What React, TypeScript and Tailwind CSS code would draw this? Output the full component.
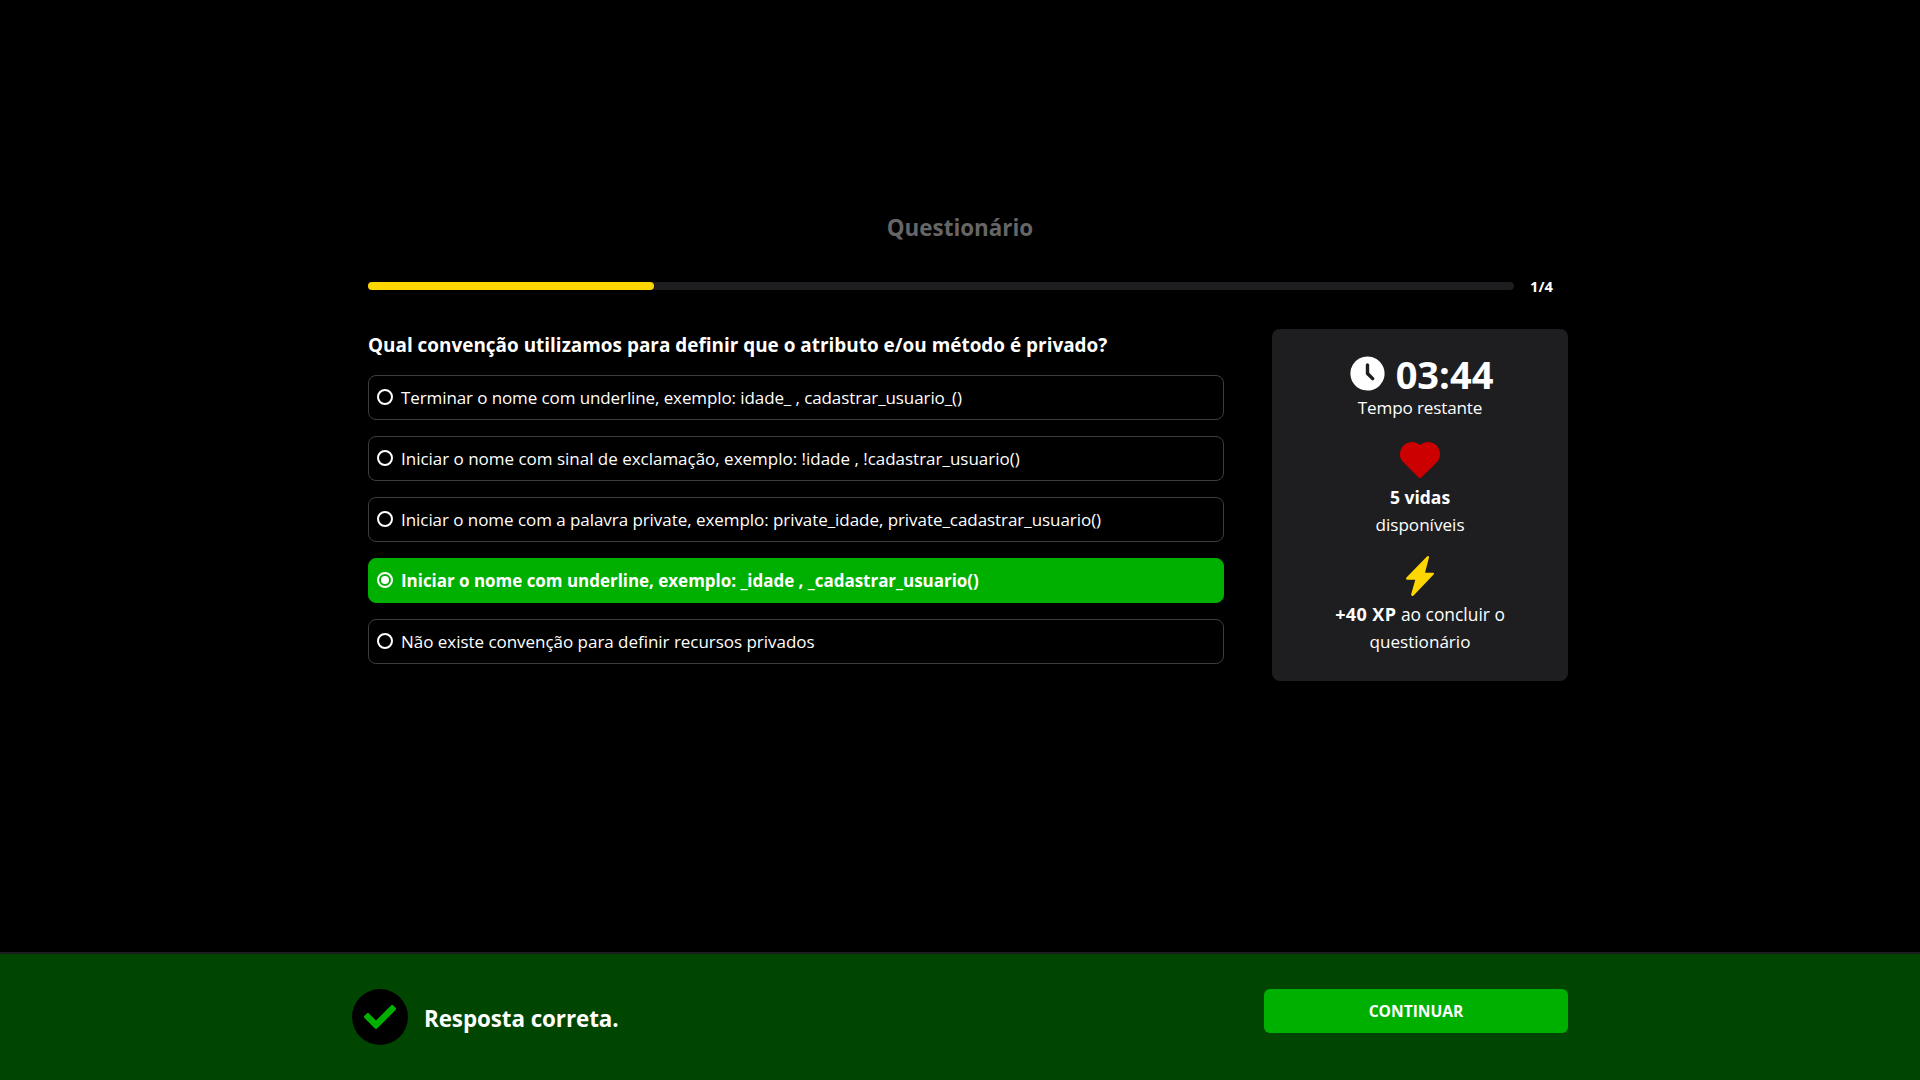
import { FaCheck } from "react-icons/fa";
import { TbClockFilled, TbHeartFilled } from "react-icons/tb";

type Option = { text: string; tracking: string; correct?: boolean };

const options: Option[] = [
  { text: "Terminar o nome com underline, exemplo: idade_ , cadastrar_usuario_()", tracking: "tracking-[-0.1px]" },
  { text: "Iniciar o nome com sinal de exclamação, exemplo: !idade , !cadastrar_usuario()", tracking: "tracking-[-0.015px]" },
  { text: "Iniciar o nome com a palavra private, exemplo: private_idade, private_cadastrar_usuario()", tracking: "tracking-[-0.055px]" },
  { text: "Iniciar o nome com underline, exemplo: _idade , _cadastrar_usuario()", tracking: "tracking-[-0.03px]", correct: true },
  { text: "Não existe convenção para definir recursos privados", tracking: "tracking-[-0.03px]" },
];

function Radio({ checked }: { checked?: boolean }) {
  return (
    <span className="mb-px flex size-4 shrink-0 items-center justify-center rounded-full border-2 border-white">
      {checked && <span className="size-2 rounded-full bg-white" />}
    </span>
  );
}

function OptionRow({ option }: { option: Option }) {
  return (
    <button
      className={
        "flex h-[45px] w-full items-center gap-2 rounded-lg border px-2 text-left text-[17px] whitespace-nowrap " +
        (option.correct ? "border-[#00b000] bg-[#00b000] font-bold " : "border-[#3d3d3f] ") +
        option.tracking
      }
    >
      <Radio checked={option.correct} />
      <span className="whitespace-pre">{option.text}</span>
    </button>
  );
}

function Bolt() {
  return (
    <svg viewBox="0 0 28 40" className="h-10 w-7 fill-[#ffd700]">
      <path d="M21.2 .3 Q23.2 -.5 23 1.6 L19 16.7 H26.9 Q28.8 17 27.6 18.5 L7.6 39.4 Q5.4 40.8 5.1 38.6 L9.3 23.7 H1.3 Q-.6 23.2 .5 21.6 Z" />
    </svg>
  );
}

export default function App() {
  return (
    <div className="flex h-[1080px] flex-col overflow-hidden bg-black font-['Open_Sans',sans-serif] text-white">
      <main className="mx-auto w-[1216px] flex-1 px-2 pt-[210px]">
        <h1 className="text-center text-[22.4px] leading-9 font-bold text-[#666666]">Questionário</h1>

        <div className="mt-[30px] ml-2 flex h-5 items-center gap-4">
          <div className="h-2 w-[1146px] rounded-full bg-[#1e1e20]">
            <div className="h-2 w-[286px] rounded-full bg-[#ffd700]" />
          </div>
          <span className="text-[14.7px] leading-5 font-bold">1/4</span>
        </div>

        <div className="mt-[33px] ml-2 flex w-[1200px] items-start gap-12">
          <section className="w-[856px] shrink-0">
            <h2 className="mb-[13px] text-[18.93px] leading-[33px] font-bold whitespace-nowrap">
              Qual convenção utilizamos para definir que o atributo e/ou método é privado?
            </h2>
            <div className="flex flex-col gap-4">
              {options.map((o) => (
                <OptionRow key={o.text} option={o} />
              ))}
            </div>
          </section>

          <aside className="flex h-[352px] w-[296px] shrink-0 flex-col items-center rounded-lg bg-[#1e1e20] pt-[25px] text-center text-[17.1px] leading-[27px]">
            <div className="flex h-10 items-center gap-2">
              <TbClockFilled size={41} className="mb-px" />
              <span className="text-[38px] leading-10 font-bold">03:44</span>
            </div>
            <p className="tracking-[-0.15px]">Tempo restante</p>
            <div className="flex h-[63px] items-center pt-[14px]">
              <TbHeartFilled size={48} className="text-[#cc0000]" />
            </div>
            <p>
              <strong className="text-[17.5px]">5 vidas</strong>
              <br />
              disponíveis
            </p>
            <div className="flex h-[63px] items-center pt-4 pb-1">
              <Bolt />
            </div>
            <p>
              <strong className="text-[18px] tracking-[0.4px]">+40 XP</strong>
              <span className="text-[17.4px]"> ao concluir o</span>
              <br />
              questionário
            </p>
          </aside>
        </div>
      </main>

      <footer className="h-32 border-t-2 border-[#1e1e20] bg-[#004500]">
        <div className="mx-auto flex w-[1216px] items-start justify-between pt-[35px]">
          <div className="flex items-center gap-4">
            <span className="flex size-14 items-center justify-center rounded-full bg-black text-[#00b000]">
              <FaCheck size={32} />
            </span>
            <span className="mt-1 text-[22.4px] font-bold tracking-[-0.08px]">Resposta correta.</span>
          </div>
          <button className="h-11 w-[304px] rounded-md bg-[#00b000] pt-0.5 text-[15.6px] font-bold">CONTINUAR</button>
        </div>
      </footer>
    </div>
  );
}
